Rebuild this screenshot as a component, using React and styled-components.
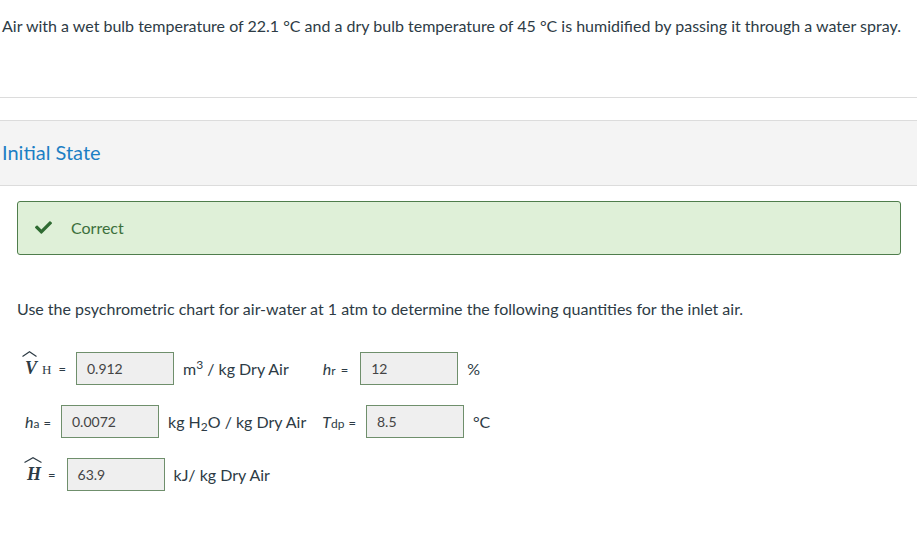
import React from 'react'
import styled, { createGlobalStyle } from 'styled-components'
import { FaCheck } from 'react-icons/fa'

const Global = createGlobalStyle`
  body {
    margin: 0;
    background: #fff;
    font-family: Lato, "Open Sans", sans-serif;
    color: #2d3b45;
  }
`

const Question = styled.div`
  height: 98px;
  border-bottom: 1px solid #dcdcdc;
  padding: 16px 2px 0;
  box-sizing: border-box;
  font-size: 16px;
  line-height: 20px;
`

const Band = styled.div`
  margin-top: 22px;
  height: 66px;
  box-sizing: border-box;
  background: #f4f4f4;
  border-top: 1px solid #dcdcdc;
  border-bottom: 1px solid #dcdcdc;
  display: flex;
  align-items: center;
  padding: 0 0 3px 2px;
`

const Title = styled.h2`
  margin: 0;
  font-weight: 400;
  font-size: 20px;
  color: #1c7fc4;
`

const Body = styled.div`
  padding: 15px 16px 0 17px;
`

const Alert = styled.div`
  height: 54px;
  box-sizing: border-box;
  background: #dff0d8;
  border: 1px solid #4f7d4c;
  border-radius: 3px;
  display: flex;
  align-items: center;
  padding: 0 0 2px 17px;
  gap: 19px;
  color: #3c6f3c;
  font-size: 16px;
`

const Prompt = styled.p`
  margin: 44px 0 33px;
  font-size: 16px;
  line-height: 20px;
`

const Rows = styled.div`
  display: flex;
  flex-direction: column;
  gap: 20px;
`

const Row = styled.div`
  display: flex;
  align-items: center;
  height: 33px;
  font-size: 16px;
`

const Label = styled.span`
  display: inline-flex;
  align-items: baseline;
  margin-left: ${p => p.$lead || 0}px;
  margin-right: ${p => p.$gap || 10}px;
  white-space: nowrap;
`

const MathBold = styled.span`
  font-family: "Liberation Serif", serif;
  font-style: italic;
  font-weight: 700;
  font-size: 18px;
  position: relative;
  display: inline-block;
`

const HatMark = styled.svg`
  position: absolute;
  left: -3px;
  top: -7px;
  width: ${p => p.$w}px;
  height: 6px;
  overflow: visible;
`

const Hat = ({ w }) => (
  <HatMark $w={w} viewBox={`0 0 ${w} 6`}>
    <path d={`M0.5 5.5 L${w / 2} 0.8 L${w - 0.5} 5.5`} fill="none" stroke="#2d3b45" strokeWidth="1.2" />
  </HatMark>
)

const MathSub = styled.span`
  font-family: "Liberation Serif", serif;
  font-size: 13px;
  margin-left: 5px;
`

const Var = styled.i`
  font-size: 16px;
`

const Sub = styled.sub`
  font-size: 12px;
  vertical-align: -3px;
  line-height: 0;
`

const Sup = styled.sup`
  font-size: 12px;
  vertical-align: 6px;
  line-height: 0;
`

const Eq = styled.span`
  font-size: 13px;
  margin-left: ${p => p.$space || 4}px;
`

const Field = styled.div`
  width: 98px;
  height: 33px;
  box-sizing: border-box;
  background: #efefef;
  border: 1px solid #6f8f6c;
  display: flex;
  align-items: center;
  padding-left: 10px;
  font-size: 14px;
  color: #444;
`

const Unit = styled.span`
  margin-left: 9px;
  margin-right: ${p => p.$after || 0}px;
  white-space: nowrap;
`

export default function App() {
  return (
    <>
      <Global />
      <Question>
        Air with a wet bulb temperature of 22.1 °C and a dry bulb temperature of 45 °C is humidified by passing it through a water spray.
      </Question>
      <Band>
        <Title>Initial State</Title>
      </Band>
      <Body>
        <Alert>
          <FaCheck size={17} color="#2f6b32" />
          <span>Correct</span>
        </Alert>
        <Prompt>
          Use the psychrometric chart for air-water at 1 atm to determine the following quantities for the inlet air.
        </Prompt>
        <Rows>
          <Row>
            <Label $lead={8}>
              <MathBold>V<Hat w={15} /></MathBold>
              <MathSub>H</MathSub>
              <Eq $space={7}>=</Eq>
            </Label>
            <Field>0.912</Field>
            <Unit $after={34}>m<Sup>3</Sup> / kg Dry Air</Unit>
            <Label $gap={12}>
              <Var>h</Var><Sub>r</Sub>
              <Eq $space={5}>=</Eq>
            </Label>
            <Field>12</Field>
            <Unit>%</Unit>
          </Row>
          <Row>
            <Label $lead={8}>
              <Var>h</Var><Sub>a</Sub>
              <Eq>=</Eq>
            </Label>
            <Field>0.0072</Field>
            <Unit $after={16}>kg H<Sub>2</Sub>O / kg Dry Air</Unit>
            <Label>
              <Var>T</Var><Sub>dp</Sub>
              <Eq>=</Eq>
            </Label>
            <Field>8.5</Field>
            <Unit>°C</Unit>
          </Row>
          <Row>
            <Label $lead={10} $gap={11}>
              <MathBold>H<Hat w={18} /></MathBold>
              <Eq $space={7}>=</Eq>
            </Label>
            <Field>63.9</Field>
            <Unit>kJ/ kg Dry Air</Unit>
          </Row>
        </Rows>
      </Body>
    </>
  )
}
